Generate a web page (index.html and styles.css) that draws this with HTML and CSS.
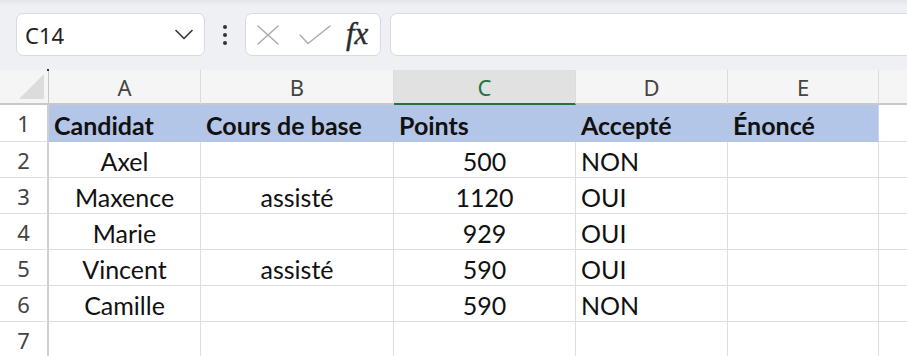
FILE: index.html
```html
<!DOCTYPE html>
<html lang="fr">
<head>
<meta charset="UTF-8">
<meta name="viewport" content="width=device-width, initial-scale=1.0">
<title>Candidats</title>
<link rel="stylesheet" href="styles.css">
</head>
<body>
  <header class="formula-bar">
    <div class="name-box">
      <span>C14</span>
      <svg width="18" height="11" viewBox="0 0 18 11" fill="none" stroke="#333" stroke-width="1.6" stroke-linecap="round" stroke-linejoin="round">
        <polyline points="1 1.5 9 9.5 17 1.5"></polyline>
      </svg>
    </div>
    <div class="more-dots">
      <i></i><i></i><i></i>
    </div>
    <div class="fx-buttons">
      <svg width="22" height="20" viewBox="0 0 22 20" fill="none" stroke="#a9a9a9" stroke-width="1.4" stroke-linecap="round">
        <line x1="1" y1="1" x2="21" y2="19"></line>
        <line x1="21" y1="1" x2="1" y2="19"></line>
      </svg>
      <svg width="32" height="20" viewBox="0 0 32 20" fill="none" stroke="#a9a9a9" stroke-width="1.4" stroke-linecap="round" stroke-linejoin="round">
        <polyline points="1 10 9 18.5 31 1"></polyline>
      </svg>
      <span class="fx">fx</span>
    </div>
    <div class="formula-input"></div>
  </header>

  <table class="sheet">
    <colgroup>
      <col class="c-head">
      <col class="c-a">
      <col class="c-b">
      <col class="c-c">
      <col class="c-d">
      <col class="c-e">
      <col>
    </colgroup>
    <thead>
      <tr>
        <th class="corner"><span class="corner-tri"></span><span class="corner-dot"></span></th>
        <th>A</th>
        <th>B</th>
        <th class="active">C</th>
        <th>D</th>
        <th>E</th>
        <th></th>
      </tr>
    </thead>
    <tbody>
      <tr class="title-row">
        <th>1</th>
        <td class="fill">Candidat</td>
        <td class="fill">Cours de base</td>
        <td class="fill">Points</td>
        <td class="fill">Accepté</td>
        <td class="fill">Énoncé</td>
        <td></td>
      </tr>
      <tr>
        <th>2</th>
        <td class="mid">Axel</td>
        <td class="mid"></td>
        <td class="mid">500</td>
        <td>NON</td>
        <td></td>
        <td></td>
      </tr>
      <tr>
        <th>3</th>
        <td class="mid">Maxence</td>
        <td class="mid">assisté</td>
        <td class="mid">1120</td>
        <td>OUI</td>
        <td></td>
        <td></td>
      </tr>
      <tr>
        <th>4</th>
        <td class="mid">Marie</td>
        <td class="mid"></td>
        <td class="mid">929</td>
        <td>OUI</td>
        <td></td>
        <td></td>
      </tr>
      <tr>
        <th>5</th>
        <td class="mid">Vincent</td>
        <td class="mid">assisté</td>
        <td class="mid">590</td>
        <td>OUI</td>
        <td></td>
        <td></td>
      </tr>
      <tr>
        <th>6</th>
        <td class="mid">Camille</td>
        <td class="mid"></td>
        <td class="mid">590</td>
        <td>NON</td>
        <td></td>
        <td></td>
      </tr>
      <tr>
        <th>7</th>
        <td></td>
        <td></td>
        <td></td>
        <td></td>
        <td></td>
        <td></td>
      </tr>
    </tbody>
  </table>
</body>
</html>
```

FILE: styles.css
```css
:root {
  --toolbar-bg: #eef0f3;
  --header-bg: #f5f5f5;
  --grid-color: #dedede;
  --fill-color: #b4c6e7;
  --accent-green: #217346;
  --ui-font: "Noto Sans", "Open Sans", sans-serif;
  --cell-font: Lato, "Liberation Sans", sans-serif;
}

* {
  box-sizing: border-box;
}

body {
  margin: 0;
  overflow: hidden;
  background-color: white;
  font-family: var(--cell-font);
}

/* barre de formule */
.formula-bar {
  display: flex;
  align-items: flex-start;
  height: 70px;
  padding: 13px 0 0 16px;
  background: linear-gradient(#e3e5e8, var(--toolbar-bg) 6px);
}

.name-box {
  display: flex;
  align-items: center;
  justify-content: space-between;
  width: 189px;
  height: 43px;
  padding: 0 11px 0 8px;
  background-color: white;
  border: 1px solid #d9dadd;
  border-radius: 7px;
  font-family: var(--ui-font);
  font-size: 22px;
  color: #222;
}

.more-dots {
  display: flex;
  flex-direction: column;
  align-items: center;
  justify-content: center;
  gap: 4px;
  width: 40px;
  height: 43px;
}

.more-dots i {
  width: 4px;
  height: 4px;
  border-radius: 50%;
  background-color: #333;
}

.fx-buttons {
  display: flex;
  align-items: center;
  width: 136px;
  height: 43px;
  padding: 0 0 0 11px;
  background-color: white;
  border: 1px solid #d9dadd;
  border-radius: 7px;
}

.fx-buttons svg {
  margin-right: 20px;
}

.fx-buttons svg + svg {
  margin-right: 15px;
}

.fx {
  font-family: "Liberation Serif", serif;
  font-style: italic;
  font-size: 31px;
  color: #2a2a2a;
  line-height: 1;
  margin-top: -3px;
  -webkit-text-stroke: 0.4px #2a2a2a;
}

.formula-input {
  flex: 1;
  height: 43px;
  margin-left: 9px;
  margin-right: -20px;
  background-color: white;
  border: 1px solid #d9dadd;
  border-radius: 7px;
}

/* feuille */
.sheet {
  border-collapse: separate;
  border-spacing: 0;
  table-layout: fixed;
  width: 940px;
}

.c-head { width: 49px; }
.c-a { width: 152px; }
.c-b { width: 193px; }
.c-c { width: 182px; }
.c-d { width: 152px; }
.c-e { width: 151px; }

.sheet thead th {
  height: 35px;
  padding: 0;
  background-color: var(--header-bg);
  border-right: 1px solid #dcdcdc;
  border-bottom: 2px solid #c8c8c8;
  font-family: var(--ui-font);
  font-size: 22px;
  font-weight: normal;
  color: #444;
  vertical-align: middle;
}

.sheet thead th.active {
  background-color: #e1e1e1;
  border-bottom-color: var(--accent-green);
  color: var(--accent-green);
}

.sheet thead th.corner {
  position: relative;
  border-right-color: #c8c8c8;
}

.corner-tri {
  position: absolute;
  right: 4px;
  bottom: 4px;
  width: 0;
  height: 0;
  border-left: 25px solid transparent;
  border-bottom: 25px solid #dcdcdc;
}

.corner-dot {
  position: absolute;
  right: -1px;
  top: -1px;
  width: 2px;
  height: 2px;
  background-color: #333;
}

.sheet tbody th {
  height: 36px;
  padding: 0;
  background-color: white;
  border-right: 2px solid #cfcfcf;
  border-bottom: 1px solid var(--grid-color);
  font-family: var(--ui-font);
  font-size: 22px;
  font-weight: normal;
  color: #444;
  vertical-align: middle;
}

.sheet td {
  height: 36px;
  padding: 0 5px;
  border-right: 1px solid var(--grid-color);
  border-bottom: 1px solid var(--grid-color);
  font-size: 25px;
  line-height: 31px;
  color: #111;
  vertical-align: bottom;
  white-space: nowrap;
}

.sheet td.mid {
  text-align: center;
}

.title-row th,
.title-row td {
  height: 37px;
}

.sheet td.fill {
  background-color: var(--fill-color);
  border-color: var(--fill-color);
  font-weight: bold;
}

.sheet td.fill:nth-child(6) {
  border-right-color: #c5d6f5;
}
```
